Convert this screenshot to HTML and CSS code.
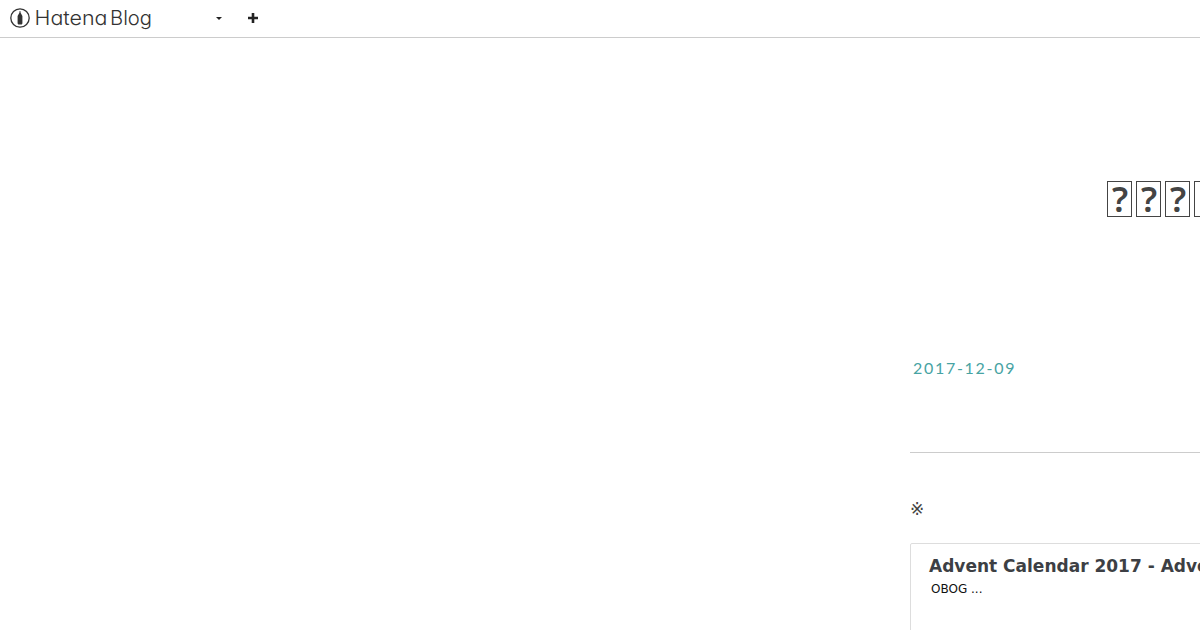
FILE: index.html
```html
<!DOCTYPE html>
<html lang="ja">
  <head>
    <meta charset="UTF-8" />
    <title>Hatena Blog</title>
    <link rel="stylesheet" href="styles.css">
  </head>

  <body>
    <header class="globalheader">
      <a class="logo">
        <svg class="logo-mark" width="20" height="20" viewBox="0 0 20 20">
          <circle cx="10" cy="10" r="9.2" fill="none" stroke="#333" stroke-width="1.3" />
          <path d="M9.4 3.2h1.2v1.6l1.8 3.2v7.6l-.7.8H8.3l-.7-.8V8l1.8-3.2z" fill="#333" />
        </svg>
        <svg class="logo-name" width="120" height="30">
          <text x="-.5" y="22" textLength="73" lengthAdjust="spacingAndGlyphs">Hatena</text>
          <text x="75" y="22" textLength="42" lengthAdjust="spacingAndGlyphs">Blog</text>
        </svg>
      </a>
      <span class="caret"></span>
      <svg class="plus" width="10" height="10" viewBox="0 0 10 10">
        <path d="M5 0v10M0 5h10" stroke="#222" stroke-width="2.6" />
      </svg>
    </header>

    <main class="container">
      <h1 class="title">
        <span class="glyph">?</span>
        <span class="glyph">?</span>
        <span class="glyph">?</span>
        <span class="glyph"></span>
      </h1>
      <article class="entry">
        <div class="date">2017-12-09</div>
        <p class="note">※</p>
        <div class="embed">
          <h2>Advent Calendar 2017 - Adventar</h2>
          <p>OBOG ...</p>
        </div>
      </article>
    </main>
  </body>
</html>
```
FILE: styles.css
```css
body {
  margin: 0;
  height: 630px;
  overflow: hidden;
  background: #fff;
  color: #444;
  font-family: "DejaVu Sans", sans-serif;
}

.globalheader {
  box-sizing: border-box;
  display: flex;
  align-items: center;
  height: 38px;
  padding: 0 0 1px 10px;
  border-bottom: 1px solid #ccc;
}

.logo {
  display: flex;
  align-items: center;
  width: 206px;
}

.logo-mark {
  margin-right: 5px;
}

.logo-name {
  overflow: visible;
  font-family: Inter, sans-serif;
  font-size: 20px;
  font-weight: 300;
  font-feature-settings: "cv11";
  fill: #333;
}

.caret {
  border: 3px solid transparent;
  border-top-color: #222;
  border-bottom: 0;
}

.plus {
  margin-left: 26px;
}

.container {
  width: 290px;
  height: 592px;
  margin-left: 910px;
  overflow: hidden;
}

.title {
  display: flex;
  gap: 4px;
  height: 36px;
  margin: 0;
  padding: 143px 0 0 197px;
}

.glyph {
  box-sizing: border-box;
  flex: 0 0 25px;
  height: 36px;
  padding-left: 1px;
  border: 1px solid #444;
  font: 600 35px/34px "Noto Sans", sans-serif;
  text-align: center;
}

.entry {
  padding-top: 140px;
}

.date {
  height: 95px;
  padding-left: 3px;
  border-bottom: 1px solid #ccc;
  color: #47a3a3;
  font: 16px/22px Lato, sans-serif;
  letter-spacing: 1.7px;
}

.note {
  height: 20px;
  margin: 46px 0 24px;
  font-size: 17px;
  line-height: 20px;
}

.embed {
  box-sizing: border-box;
  width: 500px;
  height: 150px;
  padding: 11px 18px;
  border: 1px solid #ddd;
  border-radius: 2px;
}

.embed h2 {
  margin: 0;
  color: #3d3f44;
  font-size: 17px;
  line-height: 22px;
  white-space: nowrap;
}

.embed p {
  margin: 4px 0 0 2px;
  color: #111;
  font-size: 12px;
  line-height: 16px;
}
```
